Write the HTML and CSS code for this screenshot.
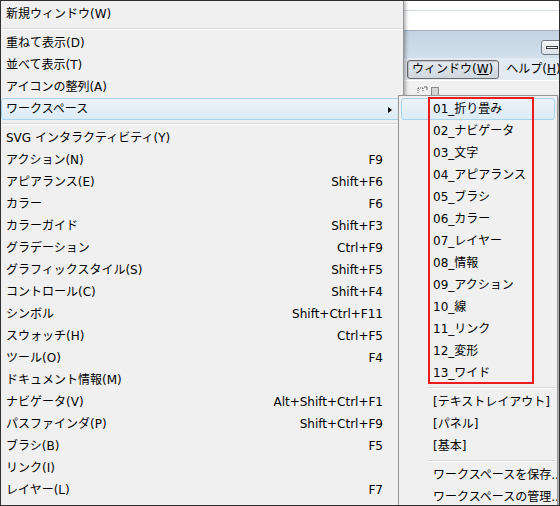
FILE: index.html
```html
<!DOCTYPE html>
<html lang="ja">
<head>
<meta charset="utf-8">
<title>ウィンドウ メニュー</title>
<link rel="stylesheet" href="styles.css">
</head>
<body>
<div class="frame">
  <div class="menu">
    <div class="item"><span>新規ウィンドウ(W)</span></div>
    <div class="sep"></div>
    <div class="item"><span>重ねて表示(D)</span></div>
    <div class="item"><span>並べて表示(T)</span></div>
    <div class="item"><span>アイコンの整列(A)</span></div>
    <div class="item hl has-sub"><span>ワークスペース</span><span class="arrow"></span></div>
    <div class="sep"></div>
    <div class="item"><span>SVG インタラクティビティ(Y)</span></div>
    <div class="item"><span>アクション(N)</span><span class="key">F9</span></div>
    <div class="item"><span>アピアランス(E)</span><span class="key">Shift+F6</span></div>
    <div class="item"><span>カラー</span><span class="key">F6</span></div>
    <div class="item"><span>カラーガイド</span><span class="key">Shift+F3</span></div>
    <div class="item"><span>グラデーション</span><span class="key">Ctrl+F9</span></div>
    <div class="item"><span>グラフィックスタイル(S)</span><span class="key">Shift+F5</span></div>
    <div class="item"><span>コントロール(C)</span><span class="key">Shift+F4</span></div>
    <div class="item"><span>シンボル</span><span class="key">Shift+Ctrl+F11</span></div>
    <div class="item"><span>スウォッチ(H)</span><span class="key">Ctrl+F5</span></div>
    <div class="item"><span>ツール(O)</span><span class="key">F4</span></div>
    <div class="item"><span>ドキュメント情報(M)</span></div>
    <div class="item"><span>ナビゲータ(V)</span><span class="key">Alt+Shift+Ctrl+F1</span></div>
    <div class="item"><span>パスファインダ(P)</span><span class="key">Shift+Ctrl+F9</span></div>
    <div class="item"><span>ブラシ(B)</span><span class="key">F5</span></div>
    <div class="item"><span>リンク(I)</span></div>
    <div class="item"><span>レイヤー(L)</span><span class="key">F7</span></div>
  </div>

  <div class="bgwin">
    <div class="bw-top"></div>
    <div class="bw-title"><span class="minbtn"><span class="dash"></span></span></div>
    <div class="bw-menu">
      <span class="mb pressed">ウィンドウ(<u>W</u>)</span>
      <span class="mb">ヘルプ(<u>H</u>)</span>
    </div>
    <div class="bw-tool">
      <svg class="tool-icon" width="26" height="10" viewBox="0 0 26 10">
        <path d="M4 3 L9 3 M4 3 L4 8 M9 3 L9 6" stroke="#555" stroke-width="1" stroke-dasharray="1 1" fill="none"/>
        <path d="M10 2 L13 2 L13 5" stroke="#666" stroke-width="1" fill="none"/>
        <rect x="17.5" y="2.5" width="7" height="8" fill="#d4d4d4" stroke="#8a8a8a"/>
      </svg>
    </div>
  </div>

  <div class="sub">
    <div class="wsgroup">
      <div class="sitem hl">01_折り畳み</div>
      <div class="sitem">02_ナビゲータ</div>
      <div class="sitem">03_文字</div>
      <div class="sitem">04_アピアランス</div>
      <div class="sitem">05_ブラシ</div>
      <div class="sitem">06_カラー</div>
      <div class="sitem">07_レイヤー</div>
      <div class="sitem">08_情報</div>
      <div class="sitem">09_アクション</div>
      <div class="sitem">10_線</div>
      <div class="sitem">11_リンク</div>
      <div class="sitem">12_変形</div>
      <div class="sitem">13_ワイド</div>
      <div class="redbox"></div>
    </div>
    <div class="ssep"></div>
    <div class="sitem">[テキストレイアウト]</div>
    <div class="sitem">[パネル]</div>
    <div class="sitem">[基本]</div>
    <div class="ssep"></div>
    <div class="sitem">ワークスペースを保存...</div>
    <div class="sitem">ワークスペースの管理...</div>
  </div>
</div>
</body>
</html>
```

FILE: styles.css
```css
html, body {
  margin: 0;
  padding: 0;
}

body {
  font-family: "DejaVu Sans", "Noto Sans CJK JP", sans-serif;
  font-size: 12px;
  color: #000;
  background: #f0f0f0;
}

.frame {
  width: 560px;
  height: 506px;
  box-sizing: border-box;
  border: 1px solid #2f2f2f;
  background: #f0f0f0;
  display: flex;
  position: relative;
  overflow: hidden;
}

/* main menu */
.menu {
  width: 402px;
  flex-shrink: 0;
  padding-top: 2px;
  background: #f0f0f0;
  border-right: 1px solid #979797;
  box-shadow: 2px 0 3px rgba(0, 0, 0, 0.28);
  position: relative;
  z-index: 1;
}

.item {
  height: 22px;
  box-sizing: border-box;
  border: 1px solid transparent;
  border-radius: 3px;
  padding: 1px 19px 0 4px;
  display: flex;
  justify-content: space-between;
  align-items: center;
  white-space: nowrap;
  line-height: 19px;
}

.item.has-sub {
  padding-right: 10px;
}

.hl {
  border-color: #a9d5ec;
  background: linear-gradient(#edf4f9, #dcebf5);
}

.arrow {
  width: 0;
  height: 0;
  border-left: 4px solid #000;
  border-top: 3.5px solid transparent;
  border-bottom: 3.5px solid transparent;
}

.sep {
  height: 7px;
  box-sizing: border-box;
  padding-top: 3px;
}

.sep::before, .ssep::before {
  content: "";
  display: block;
  height: 1px;
  background: #d7d7d7;
  border-bottom: 1px solid #ffffff;
}

/* background window */
.bgwin {
  flex: 1;
  display: flex;
  flex-direction: column;
  overflow: hidden;
  background: #f0f0f0;
}

.bw-top {
  height: 29px;
  flex-shrink: 0;
  border-bottom: 1px solid #a4afba;
  background: linear-gradient(#ffffff 9px, #cddcec 9px, #cddcec 10px, #ffffff 10px);
}

.bw-title {
  height: 27px;
  flex-shrink: 0;
  box-sizing: border-box;
  padding-top: 9px;
  display: flex;
  justify-content: flex-end;
  background: linear-gradient(#c3d2e2, #d3dfeb);
}

.minbtn {
  width: 24px;
  height: 15px;
  box-sizing: border-box;
  margin-right: -6px;
  border: 1px solid #6f7b88;
  border-radius: 3px;
  background: linear-gradient(#f6f8fa, #d9e0e7);
  display: flex;
  align-items: center;
  padding-left: 4px;
}

.minbtn .dash {
  width: 12px;
  height: 3px;
  box-sizing: border-box;
  border: 1px solid #3c3c3c;
  background: #fff;
}

.bw-menu {
  height: 22px;
  flex-shrink: 0;
  box-sizing: border-box;
  padding: 2px 0 0 3px;
  display: flex;
  background: #e2eaf3;
  white-space: nowrap;
}

.mb {
  height: 19px;
  box-sizing: border-box;
  border: 1px solid transparent;
  border-radius: 3px;
  padding: 0 5px 0 4px;
  line-height: 17px;
  font-size: 12px;
}

.mb.pressed {
  border-color: #6b6b6b;
  background: linear-gradient(#e3e8ed, #cfd7df);
  box-shadow: inset 1px 1px 1px rgba(0, 0, 0, 0.15);
  margin-right: 2px;
}

.bw-tool {
  flex: 1;
  background: #f0f0f0;
  border-top: 1px solid #ffffff;
  padding: 4px 0 0 10px;
}

.tool-icon {
  display: block;
}

/* submenu */
.sub {
  position: absolute;
  left: 397px;
  top: 94px;
  width: 160px;
  bottom: -20px;
  box-sizing: border-box;
  border: 1px solid #979797;
  background: #f0f0f0;
  padding: 2px;
  box-shadow: 2px 2px 3px rgba(0, 0, 0, 0.3);
  overflow: hidden;
  z-index: 2;
}

.wsgroup {
  position: relative;
}

.sitem {
  height: 22px;
  box-sizing: border-box;
  border: 1px solid transparent;
  border-radius: 3px;
  padding: 1px 0 0 31px;
  line-height: 19px;
  white-space: nowrap;
}

.sitem.hl {
  border-color: #a9d5ec;
}

.ssep {
  height: 7px;
  box-sizing: border-box;
  padding-top: 3px;
  margin-left: 27px;
}

.redbox {
  position: absolute;
  left: 27px;
  top: -1px;
  width: 106px;
  height: 287px;
  box-sizing: border-box;
  border: 2px solid #ec1c1c;
  pointer-events: none;
}
```
